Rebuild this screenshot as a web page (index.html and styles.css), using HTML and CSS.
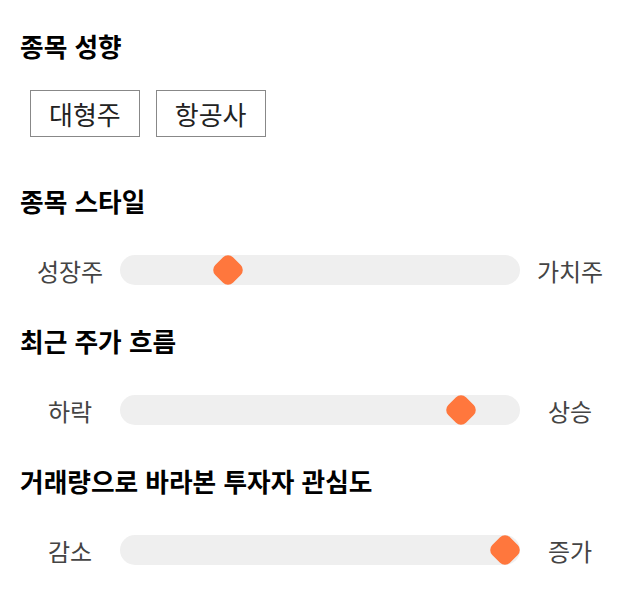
FILE: index.html
```html
<!DOCTYPE html>
<html lang="ko">
<head>
  <meta charset="UTF-8" />
  <meta name="viewport" content="width=device-width, initial-scale=1.0" />
  <title>종목 성향</title>
  <link rel="stylesheet" href="styles.css">
</head>
<body>
  <div class="profile">
    <section class="block">
      <h2>종목 성향</h2>
      <div class="tags">
        <span class="tag">대형주</span>
        <span class="tag">항공사</span>
      </div>
    </section>

    <section class="block">
      <h2>종목 스타일</h2>
      <div class="scale">
        <span class="scale-label">성장주</span>
        <div class="track"><div class="rail"><span class="thumb" style="left: 25%"></span></div></div>
        <span class="scale-label">가치주</span>
      </div>
    </section>

    <section class="block">
      <h2>최근 주가 흐름</h2>
      <div class="scale">
        <span class="scale-label">하락</span>
        <div class="track"><div class="rail"><span class="thumb" style="left: 88%"></span></div></div>
        <span class="scale-label">상승</span>
      </div>
    </section>

    <section class="block">
      <h2>거래량으로 바라본 투자자 관심도</h2>
      <div class="scale">
        <span class="scale-label">감소</span>
        <div class="track"><div class="rail"><span class="thumb" style="left: 100%"></span></div></div>
        <span class="scale-label">증가</span>
      </div>
    </section>
  </div>
</body>
</html>
```

FILE: styles.css
```css
* { box-sizing: border-box; }

body {
  margin: 0;
  font-family: "Noto Sans CJK KR", "Noto Sans", sans-serif;
  background: #fff;
  color: #111;
}

.profile {
  padding: 30px 20px;
}

.block + .block {
  margin-top: 40px;
}

.block:first-child {
  padding-bottom: 8px;
}

h2 {
  margin: 0 0 38px;
  font-size: 25.7px;
  line-height: 32px;
  font-weight: 700;
  color: #000;
}

.block:first-child h2 {
  margin-bottom: 28px;
}

.tags {
  display: flex;
  gap: 16px;
  padding-left: 10px;
}

.tag {
  display: inline-flex;
  align-items: center;
  justify-content: center;
  height: 47px;
  padding: 0 18px;
  border: 1px solid #888;
  font-size: 26px;
  color: #222;
}

.scale {
  display: flex;
  align-items: center;
  height: 30px;
}

.scale-label {
  width: 100px;
  text-align: center;
  font-size: 24px;
  color: #444;
}

.track {
  flex: 1;
  height: 30px;
  padding: 0 15px;
  border-radius: 15px;
  background: #efefef;
}

.rail {
  position: relative;
  height: 100%;
}

.thumb {
  position: absolute;
  top: 50%;
  width: 25px;
  height: 25px;
  border-radius: 7px;
  background: #ff773d;
  transform: translate(-50%, -50%) rotate(45deg);
}
```
